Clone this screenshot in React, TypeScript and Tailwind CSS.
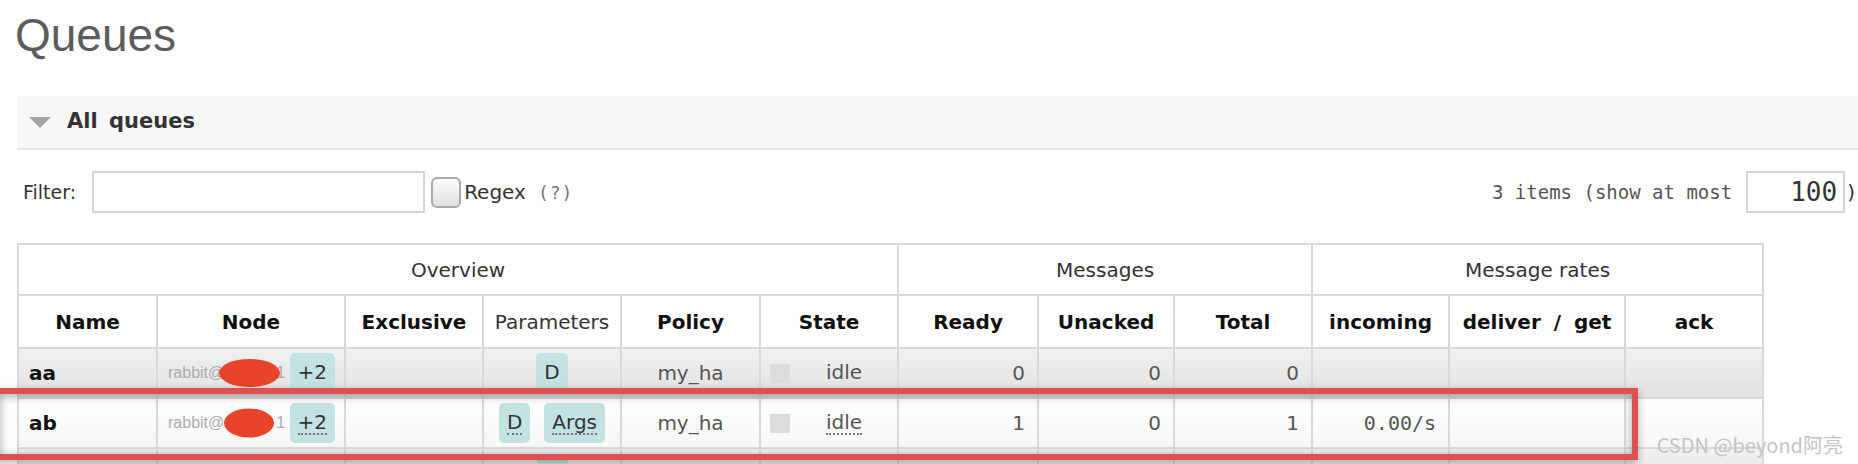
import type { ReactNode } from 'react'

type Queue = {
  name: string
  params: string[]
  policy: string
  ready: string
  unacked: string
  total: string
  incoming: string
  alt: boolean
  // red mark drawn over the host part of the node name
  mask: { left: number; width: number; height: number }
}

const queues: Queue[] = [
  { name: 'aa', params: ['D'], policy: 'my_ha', ready: '0', unacked: '0', total: '0', incoming: '', alt: true, mask: { left: 51, width: 61, height: 28 } },
  { name: 'ab', params: ['D', 'Args'], policy: 'my_ha', ready: '1', unacked: '0', total: '1', incoming: '0.00/s', alt: false, mask: { left: 56, width: 50, height: 29 } },
]

const colWidths = ['w-[139px]', 'w-[188px]', 'w-[138px]', 'w-[138px]', 'w-[139px]', 'w-[138px]', 'w-[140px]', 'w-[136px]', 'w-[138px]', 'w-[137px]', 'w-[176px]', 'w-[138px]']

const cell = 'border-2 border-[#d9d9d9] p-0'
const sans = "font-['DejaVu_Sans',sans-serif]"
const mono = "font-['DejaVu_Sans_Mono',monospace]"

function Abbr({ children, dotted }: { children: ReactNode; dotted: boolean }) {
  return (
    <span className={`border-b-2 leading-[22px] ${dotted ? 'border-dotted border-[#777]' : 'border-transparent'}`}>
      {children}
    </span>
  )
}

function Badge({ children, dotted }: { children: ReactNode; dotted: boolean }) {
  return (
    <span className="inline-flex h-[40px] items-center rounded-[5px] bg-[#c3e3e3] px-[8px] text-[20px] text-[#333]">
      <Abbr dotted={dotted}>{children}</Abbr>
    </span>
  )
}

function Th({ children, bold = true, span = 1 }: { children: ReactNode; bold?: boolean; span?: number }) {
  return (
    <th colSpan={span} className={`${cell} text-center text-[20px] ${bold ? 'font-bold text-[#111]' : 'font-normal text-[#333]'}`}>
      {children}
    </th>
  )
}

function Num({ children, className = '' }: { children: ReactNode; className?: string }) {
  return <td className={`${cell} pr-[12px] text-right text-[20px] text-[#555] ${className}`}>{children}</td>
}

function QueueRow({ q }: { q: Queue }) {
  const bg = q.alt ? 'bg-linear-to-b from-[#f1f1f1] to-[#e1e1e1]' : 'bg-linear-to-b from-[#ffffff] to-[#f6f6f6]'
  const dotted = !q.alt
  return (
    <tr className={`h-[50px] ${bg}`}>
      <td className={`${cell} pl-[10px] text-[20px] font-bold text-[#111]`}>{q.name}</td>
      <td className={cell}>
        <div className="flex items-center justify-between pl-[10px] pr-[9px]">
          <span className="relative flex items-center font-['Liberation_Sans',sans-serif] text-[16px] text-[#ababab]">
            rabbit@<span className="ml-[52px]">1</span>
            <span
              className="absolute top-1/2 -translate-y-1/2 rounded-[50%] bg-[#e8432b]"
              style={{ left: q.mask.left, width: q.mask.width, height: q.mask.height }}
            />
          </span>
          <Badge dotted={dotted}>+2</Badge>
        </div>
      </td>
      <td className={cell} />
      <td className={cell}>
        <div className="flex items-center justify-center gap-[14px]">
          {q.params.map(p => (
            <Badge key={p} dotted={dotted}>{p}</Badge>
          ))}
        </div>
      </td>
      <td className={`${cell} text-center text-[20px] text-[#555]`}>{q.policy}</td>
      <td className={cell}>
        <div className="flex items-center gap-[36px] pl-[9px] text-[20px] text-[#555]">
          <span className="h-[19px] w-[20px] bg-[#dcdcdc]" />
          <Abbr dotted={dotted}>idle</Abbr>
        </div>
      </td>
      <Num>{q.ready}</Num>
      <Num>{q.unacked}</Num>
      <Num>{q.total}</Num>
      <Num className={`${mono} text-[19px] pr-[9px]`}>{q.incoming}</Num>
      <td className={cell} />
      <td className={cell} />
    </tr>
  )
}

export default function App() {
  return (
    <div className={`relative h-[464px] w-[1858px] overflow-hidden bg-white ${sans}`}>
      <h1 className="ml-[15px] mt-[11px] font-['Liberation_Sans',sans-serif] text-[46px] font-normal leading-[48px] text-[#5c5c5c]">
        Queues
      </h1>

      {/* section header */}
      <div className="ml-[17px] mt-[37px] flex h-[54px] items-center gap-[16px] border-b-2 border-[#e4e4e4] bg-[#f7f7f7] pl-[12px]">
        <svg width="22" height="11" viewBox="0 0 22 11">
          <polygon points="0,0 22,0 11,11" fill="#a3a3a3" />
        </svg>
        <span className="text-[21px] font-bold text-[#333] [word-spacing:4px]">All queues</span>
      </div>

      {/* filter row */}
      <div className="mt-[21px] flex h-[42px] items-center pl-[23px] pr-[3px] text-[19px] text-[#333]">
        <span>Filter:</span>
        <input className="ml-[16px] h-[42px] w-[333px] border-2 border-[#d6d6d6] bg-white outline-none" />
        <span className="ml-[6px] h-[31px] w-[30px] rounded-[6px] border-2 border-[#a9a9a9] bg-linear-to-b from-[#fbfbfb] to-[#e2e2e2]" />
        <span className="ml-[3px] text-[20px]">Regex</span>
        <span className={`ml-[12px] ${mono} text-[18px] tracking-[1px] text-[#777]`}>(?)</span>

        <div className="ml-auto flex items-center">
          <span className={`${mono} text-[19px] text-[#555]`}>3 items (show at most</span>
          <div className={`ml-[14px] flex h-[42px] w-[99px] items-center justify-end border-2 border-[#d6d6d6] pr-[6px] ${mono} text-[26px] text-[#333]`}>
            100
          </div>
          <span className="ml-[2px] text-[20px] text-[#333]">)</span>
        </div>
      </div>

      {/* queue table */}
      <table className="ml-[17px] mt-[30px] w-[1745px] table-fixed border-collapse border-2 border-[#d9d9d9]">
        <colgroup>
          {colWidths.map((w, i) => (
            <col key={i} className={w} />
          ))}
        </colgroup>
        <thead>
          <tr className="h-[51px]">
            <Th span={6} bold={false}>Overview</Th>
            <Th span={3} bold={false}>Messages</Th>
            <Th span={3} bold={false}>Message rates</Th>
          </tr>
          <tr className="h-[53px]">
            <Th>Name</Th>
            <Th>Node</Th>
            <Th>Exclusive</Th>
            <Th bold={false}>Parameters</Th>
            <Th>Policy</Th>
            <Th>State</Th>
            <Th>Ready</Th>
            <Th>Unacked</Th>
            <Th>Total</Th>
            <Th>incoming</Th>
            <Th>
              <span className="[word-spacing:6px]">deliver / get</span>
            </Th>
            <Th>ack</Th>
          </tr>
        </thead>
        <tbody>
          {queues.map(q => (
            <QueueRow key={q.name} q={q} />
          ))}
          {/* next row, only its top edge is on screen */}
          <tr className="h-[50px] bg-linear-to-b from-[#f1f1f1] to-[#e1e1e1]">
            {colWidths.map((_, i) => (
              <td key={i} className={`${cell} align-top`}>
                {i === 3 && <div className="mx-auto mt-[6px] h-[40px] w-[31px] rounded-[5px] bg-[#c3e3e3]" />}
              </td>
            ))}
          </tr>
        </tbody>
      </table>

      {/* highlight frame around the second row */}
      <div className="absolute left-[-6px] top-[388px] h-[72px] w-[1644px] border-[6px] border-[#df5150] shadow-[inset_0_2px_10px_rgba(0,0,0,0.35),0_3px_8px_rgba(0,0,0,0.3)]" />

      <span className="absolute right-[15px] top-[430px] font-['Noto_Sans_CJK_SC',sans-serif] text-[20px] text-[#c4c4c4]">
        CSDN @beyond阿亮
      </span>
    </div>
  )
}
